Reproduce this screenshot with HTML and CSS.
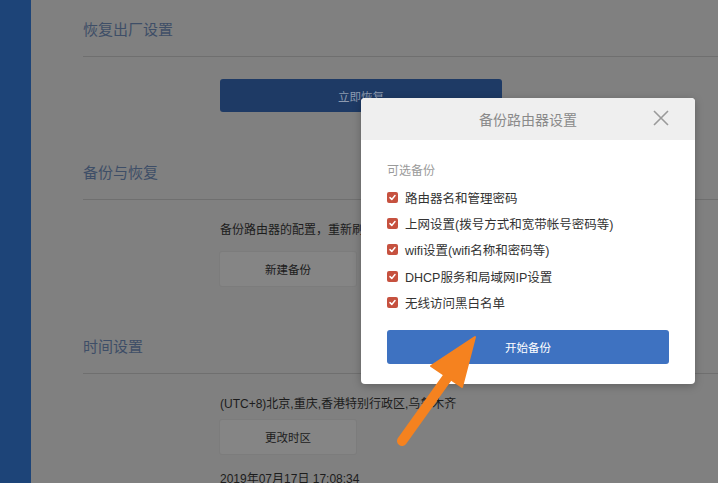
FILE: index.html
```html
<!DOCTYPE html>
<html lang="zh-CN">
<head>
<meta charset="utf-8">
<title>备份路由器设置</title>
<link rel="stylesheet" href="styles.css">
</head>
<body>
<div class="page">
  <aside class="sidebar"></aside>
  <main class="main">
    <section class="section s1">
      <h2 class="section-title">恢复出厂设置</h2>
      <div class="section-body">
        <button class="btn btn-primary-dim">立即恢复</button>
      </div>
    </section>
    <section class="section s2">
      <h2 class="section-title">备份与恢复</h2>
      <div class="section-body">
        <p class="desc clipped">备份路由器的配置，重新刷</p>
        <button class="btn btn-gray">新建备份</button>
      </div>
    </section>
    <section class="section s3">
      <h2 class="section-title">时间设置</h2>
      <div class="section-body">
        <p class="desc">(UTC+8)北京,重庆,香港特别行政区,乌鲁木齐</p>
        <button class="btn btn-gray">更改时区</button>
        <p class="desc date">2019年07月17日 17:08:34</p>
      </div>
    </section>
  </main>
</div>

<div class="dialog">
  <div class="dialog-header">
    <span class="dialog-title">备份路由器设置</span>
    <svg class="close" width="16" height="16" viewBox="0 0 16 16"><path d="M1 1L15 15M15 1L1 15" stroke="#9a9a9a" stroke-width="1.6" fill="none"/></svg>
  </div>
  <div class="dialog-body">
    <div class="opt-label">可选备份</div>
    <ul class="opts">
      <li><span class="cb"><svg width="11" height="11" viewBox="0 0 11 11"><path d="M3 5.6L4.8 7.4L8 3.6" stroke="#fff" stroke-width="1.5" fill="none" stroke-linecap="round" stroke-linejoin="round"/></svg></span>路由器名和管理密码</li>
      <li><span class="cb"><svg width="11" height="11" viewBox="0 0 11 11"><path d="M3 5.6L4.8 7.4L8 3.6" stroke="#fff" stroke-width="1.5" fill="none" stroke-linecap="round" stroke-linejoin="round"/></svg></span>上网设置(拨号方式和宽带帐号密码等)</li>
      <li><span class="cb"><svg width="11" height="11" viewBox="0 0 11 11"><path d="M3 5.6L4.8 7.4L8 3.6" stroke="#fff" stroke-width="1.5" fill="none" stroke-linecap="round" stroke-linejoin="round"/></svg></span>wifi设置(wifi名称和密码等)</li>
      <li><span class="cb"><svg width="11" height="11" viewBox="0 0 11 11"><path d="M3 5.6L4.8 7.4L8 3.6" stroke="#fff" stroke-width="1.5" fill="none" stroke-linecap="round" stroke-linejoin="round"/></svg></span>DHCP服务和局域网IP设置</li>
      <li><span class="cb"><svg width="11" height="11" viewBox="0 0 11 11"><path d="M3 5.6L4.8 7.4L8 3.6" stroke="#fff" stroke-width="1.5" fill="none" stroke-linecap="round" stroke-linejoin="round"/></svg></span>无线访问黑白名单</li>
    </ul>
    <button class="btn btn-primary">开始备份</button>
  </div>
</div>

<svg class="arrow" width="718" height="483" viewBox="0 0 718 483">
  <line x1="402" y1="441" x2="452" y2="371" stroke="#f5821f" stroke-width="10" stroke-linecap="round"/>
  <polygon points="431,366 475,337 462,387" fill="#f5821f" stroke="#f5821f" stroke-width="2" stroke-linejoin="round"/>
</svg>
</body>
</html>
```

FILE: styles.css
```css
* { box-sizing: border-box; }
html, body {
  margin: 0;
  padding: 0;
  width: 718px;
  height: 483px;
  overflow: hidden;
  background: #808080;
  font-family: "Liberation Sans", "Noto Sans CJK SC", sans-serif;
}
.page {
  display: flex;
  height: 483px;
  overflow: hidden;
}
.sidebar {
  width: 31px;
  flex: none;
  background: #1d4478;
}
.main {
  flex: 1;
  padding-left: 52px;
}
.section-title {
  margin: 0;
  padding: 20px 0 16px;
  line-height: 20px;
  font-size: 15px;
  font-weight: normal;
  color: #3e4e67;
  border-bottom: 1px solid #6f6f6f;
}
.section-body {
  padding: 22px 0 31px 137px;
}
.desc {
  margin: 0;
  font-size: 12px;
  line-height: 16px;
  color: #1c1c1c;
  white-space: nowrap;
}
.clipped {
  width: 141px;
  overflow: hidden;
}
.s2 .desc { margin-bottom: 14px; }
.s3 .desc { margin-bottom: 8px; }
.s3 .date { margin-top: 17px; }
.btn {
  display: block;
  border: none;
  font-family: inherit;
  font-size: 11.5px;
  padding: 0;
}
.btn-primary-dim {
  width: 282px;
  height: 33px;
  background: #1e3a65;
  color: #8d9ab0;
  border-radius: 3px;
}
.btn-gray {
  width: 136px;
  height: 34px;
  background: #858585;
  color: #1c1c1c;
  border-radius: 2px;
  box-shadow: 0 0 0 1px #7c7c7c;
}
.dialog {
  position: absolute;
  left: 361px;
  top: 98px;
  width: 334px;
  height: 286px;
  background: #fff;
  border-radius: 4px;
  overflow: hidden;
  box-shadow: 0 2px 8px rgba(0,0,0,0.25);
}
.dialog-header {
  height: 42px;
  background: #efefef;
  display: flex;
  align-items: center;
  justify-content: center;
  position: relative;
}
.dialog-title {
  font-size: 14px;
  color: #8a8a8a;
}
.close {
  position: absolute;
  right: 26px;
  top: 12px;
}
.dialog-body {
  padding: 23px 26px 20px;
}
.opt-label {
  font-size: 12px;
  line-height: 16px;
  color: #9a9a9a;
  margin-bottom: 5px;
}
.opts {
  list-style: none;
  margin: 0 0 15px;
  padding: 0;
}
.opts li {
  display: flex;
  align-items: center;
  height: 26.3px;
  font-size: 12.5px;
  color: #333;
}
.cb {
  width: 11px;
  height: 11px;
  border-radius: 2px;
  background: #c6513f;
  margin-right: 7px;
  display: flex;
}
.btn-primary {
  width: 282px;
  height: 34px;
  background: #3e72c1;
  color: #fff;
  border-radius: 3px;
}
.arrow {
  position: absolute;
  left: 0;
  top: 0;
  pointer-events: none;
}
```
